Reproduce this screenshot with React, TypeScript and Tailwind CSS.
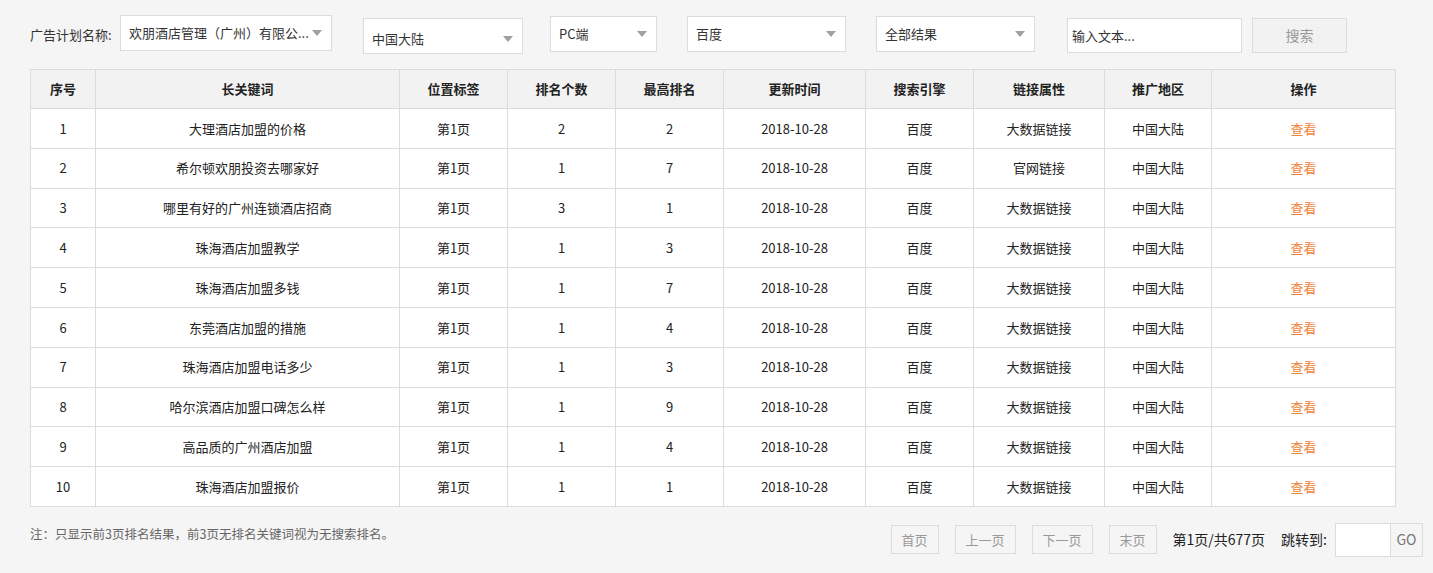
import React from 'react'

const rows = [
  ['1', '大理酒店加盟的价格', '第1页', '2', '2', '2018-10-28', '百度', '大数据链接', '中国大陆'],
  ['2', '希尔顿欢朋投资去哪家好', '第1页', '1', '7', '2018-10-28', '百度', '官网链接', '中国大陆'],
  ['3', '哪里有好的广州连锁酒店招商', '第1页', '3', '1', '2018-10-28', '百度', '大数据链接', '中国大陆'],
  ['4', '珠海酒店加盟教学', '第1页', '1', '3', '2018-10-28', '百度', '大数据链接', '中国大陆'],
  ['5', '珠海酒店加盟多钱', '第1页', '1', '7', '2018-10-28', '百度', '大数据链接', '中国大陆'],
  ['6', '东莞酒店加盟的措施', '第1页', '1', '4', '2018-10-28', '百度', '大数据链接', '中国大陆'],
  ['7', '珠海酒店加盟电话多少', '第1页', '1', '3', '2018-10-28', '百度', '大数据链接', '中国大陆'],
  ['8', '哈尔滨酒店加盟口碑怎么样', '第1页', '1', '9', '2018-10-28', '百度', '大数据链接', '中国大陆'],
  ['9', '高品质的广州酒店加盟', '第1页', '1', '4', '2018-10-28', '百度', '大数据链接', '中国大陆'],
  ['10', '珠海酒店加盟报价', '第1页', '1', '1', '2018-10-28', '百度', '大数据链接', '中国大陆'],
]

const headers = ['序号', '长关键词', '位置标签', '排名个数', '最高排名', '更新时间', '搜索引擎', '链接属性', '推广地区', '操作']
const widths = [65, 304, 108, 108, 108, 142, 108, 131, 107, 184]

function Arrow() {
  return (
    <svg width="10" height="6" viewBox="0 0 10 6" className="shrink-0">
      <path d="M0 0 L10 0 L5 6 Z" fill="#a0a0a0" />
    </svg>
  )
}

function Select({ label, className }: { label: string; className: string }) {
  return (
    <div className={`h-[36px] bg-white border border-[#dcdcdc] flex items-center justify-between pl-2 pr-[9px] text-[13px] text-[#333] ${className}`}>
      <span className="truncate">{label}</span>
      <Arrow />
    </div>
  )
}

function PageBtn({ label, w }: { label: string; w: string }) {
  return (
    <div className={`h-[29px] ${w} border border-[#dcdcdc] flex items-center justify-center text-[13px] text-[#999]`}>
      {label}
    </div>
  )
}

export default function App() {
  return (
    <div
      className="w-[1433px] h-[573px] bg-[#f5f5f5] text-[#333] overflow-hidden"
      style={{ fontFamily: '"Noto Sans CJK SC", "Noto Sans", sans-serif' }}
    >
      {/* Filter bar */}
      <div className="flex items-start pt-4 pl-[30px] h-[69px]">
        <span className="text-[13px] mt-[9px] w-[90px]">广告计划名称:</span>
        <Select label="欢朋酒店管理（广州）有限公..." className="w-[212px] -mt-[1px]" />
        <Select label="中国大陆" className="w-[160px] ml-[31px] mt-[2px] pt-[5px]" />
        <Select label="PC端" className="w-[107px] ml-[27px]" />
        <Select label="百度" className="w-[159px] ml-[30px]" />
        <Select label="全部结果" className="w-[159px] ml-[30px]" />
        <div className="w-[175px] h-[35px] ml-[32px] mt-[2px] bg-white border border-[#dcdcdc] flex items-center pl-[4px] text-[13px] text-[#333]">
          输入文本...
        </div>
        <div className="w-[95px] h-[35px] ml-[10px] mt-[2px] bg-[#f2f2f2] border border-[#dcdcdc] flex items-center justify-center text-[14px] text-[#999]">
          搜索
        </div>
      </div>

      {/* Table */}
      <div className="pl-[30px]">
        <table className="table-fixed border-collapse bg-white text-[13px]" style={{ width: 1366 }}>
          <colgroup>
            {widths.map((w, i) => (
              <col key={i} style={{ width: w }} />
            ))}
          </colgroup>
          <thead>
            <tr className="h-[39px] bg-[#f2f2f2]">
              {headers.map((h) => (
                <th key={h} className="border border-[#dcdcdc] font-bold text-[#222] p-0 text-center">
                  {h}
                </th>
              ))}
            </tr>
          </thead>
          <tbody>
            {rows.map((r) => (
              <tr key={r[0]} className="h-[39.8px]">
                {r.map((c, i) => (
                  <td key={i} className="border border-[#dcdcdc] p-0 text-center text-[#222]">
                    {c}
                  </td>
                ))}
                <td className="border border-[#dcdcdc] p-0 text-center text-[#f0843c]">查看</td>
              </tr>
            ))}
          </tbody>
        </table>
      </div>

      {/* Footer */}
      <div className="flex items-start pl-[30px] pt-[17px]">
        <span className="text-[12.5px] text-[#666] mt-[1px]">注：只显示前3页排名结果，前3页无排名关键词视为无搜索排名。</span>
        <div className="ml-auto flex items-center mr-[10px] -mt-[1px]">
          <PageBtn label="首页" w="w-[48px]" />
          <div className="w-4" />
          <PageBtn label="上一页" w="w-[61px]" />
          <div className="w-4" />
          <PageBtn label="下一页" w="w-[61px]" />
          <div className="w-4" />
          <PageBtn label="末页" w="w-[48px]" />
          <span className="ml-4 text-[14px] text-[#222]">第1页/共677页</span>
          <span className="ml-4 text-[14px] text-[#222]">跳转到:</span>
          <div className="ml-2 flex h-[34px] border border-[#dcdcdc]">
            <div className="w-[55px] bg-white border-r border-[#dcdcdc]" />
            <div className="w-[31px] flex items-center justify-center text-[14px] text-[#777]">GO</div>
          </div>
        </div>
      </div>
    </div>
  )
}
